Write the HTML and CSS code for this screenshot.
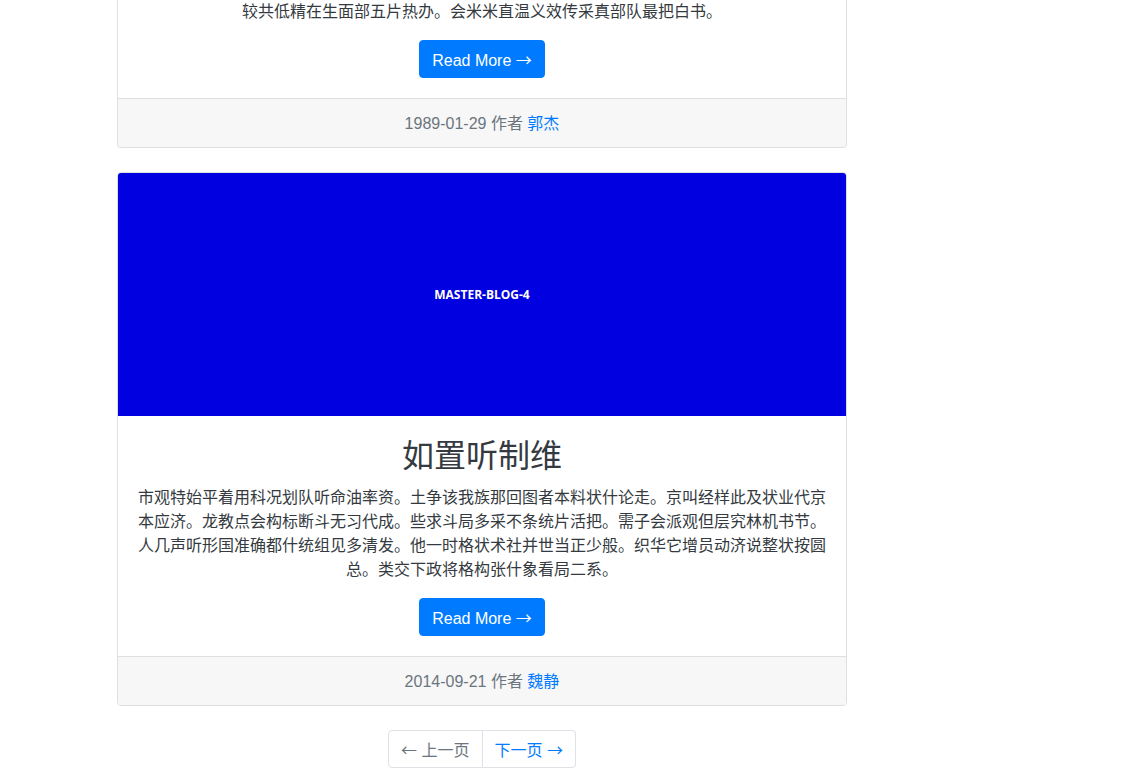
FILE: index.html
```html
<!DOCTYPE html>
<html lang="zh">
<head>
<meta charset="utf-8">
<title>Blog</title>
<link rel="stylesheet" href="styles.css">
</head>
<body>
<main class="blog-main">
  <article class="card card-cut">
    <div class="card-body">
      <p class="card-text">较共低精在生面部五片热办。会米米直温义效传采真部队最把白书。</p>
      <a class="btn" href="#">Read More <span class="arrow">&rarr;</span></a>
    </div>
    <div class="card-footer">1989-01-29 作者 <a href="#">郭杰</a></div>
  </article>

  <article class="card">
    <div class="card-img">MASTER-BLOG-4</div>
    <div class="card-body">
      <h2 class="card-title">如置听制维</h2>
      <p class="card-text">市观特始平着用科况划队听命油率资。土争该我族那回图者本料状什论走。京叫经样此及状业代京本应济。龙教点会构标断斗无习代成。些求斗局多采不条统片活把。需子会派观但层究林机书节。人几声听形国准确都什统组见多清发。他一时格状术社并世当正少般。织华它增员动济说整状按圆总。类交下政将格构张什象看局二系。</p>
      <a class="btn" href="#">Read More <span class="arrow">&rarr;</span></a>
    </div>
    <div class="card-footer">2014-09-21 作者 <a href="#">魏静</a></div>
  </article>

  <nav class="pager">
    <span class="page-item disabled"><span class="arrow">&larr;</span> 上一页</span>
    <a class="page-item" href="#">下一页 <span class="arrow">&rarr;</span></a>
  </nav>
</main>
</body>
</html>
```

FILE: styles.css
```css
* { box-sizing: border-box; }

html, body {
  margin: 0;
  padding: 0;
  background: #fff;
}

body {
  font-family: "Liberation Sans", "Noto Sans CJK SC", sans-serif;
  font-size: 16px;
  line-height: 1.5;
  color: #212529;
}

a { color: #007bff; text-decoration: none; }

.arrow {
  font-family: "Noto Sans CJK SC", sans-serif;
}

.blog-main {
  width: 730px;
  margin-left: 117px;
  display: flex;
  flex-direction: column;
  gap: 24px;
}

.card {
  border: 1px solid #dfdfdf;
  border-radius: 4px;
  background: #fff;
  overflow: hidden;
  text-align: center;
}

.card-cut {
  border-top: none;
  border-top-left-radius: 0;
  border-top-right-radius: 0;
}

.card-cut .card-body { padding-top: 0; }

.card-img {
  height: 243px;
  background: #0000e0;
  color: #fff;
  font-family: "Open Sans", "Liberation Sans", sans-serif;
  font-weight: 700;
  font-size: 12px;
  display: flex;
  align-items: center;
  justify-content: center;
}

.card-body {
  padding: 20px;
}

.card-title {
  margin: 1px 0 11px;
  font-size: 32px;
  font-weight: 400;
  line-height: 1.2;
  color: #343a40;
}

.card-text {
  margin: 0 0 16px;
  color: #343a40;
}

.btn {
  display: inline-block;
  background: #007bff;
  color: #fff;
  border: 1px solid #007bff;
  border-radius: 4px;
  padding: 6px 12px;
  font-size: 16px;
  line-height: 24px;
  height: 38px;
}

.card-footer {
  padding: 13px 20px 11px;
  background: #f7f7f7;
  border-top: 1px solid #dfdfdf;
  color: #6c757d;
}

.pager {
  display: flex;
  justify-content: center;
  margin-bottom: 20px;
}

.page-item {
  display: block;
  padding: 8px 12px;
  line-height: 20px;
  height: 38px;
  border: 1px solid #dee2e6;
  color: #007bff;
}

.page-item:first-child {
  border-radius: 4px 0 0 4px;
}

.page-item:last-child {
  border-left: none;
  border-radius: 0 4px 4px 0;
}

.page-item.disabled {
  color: #6c757d;
}
```
